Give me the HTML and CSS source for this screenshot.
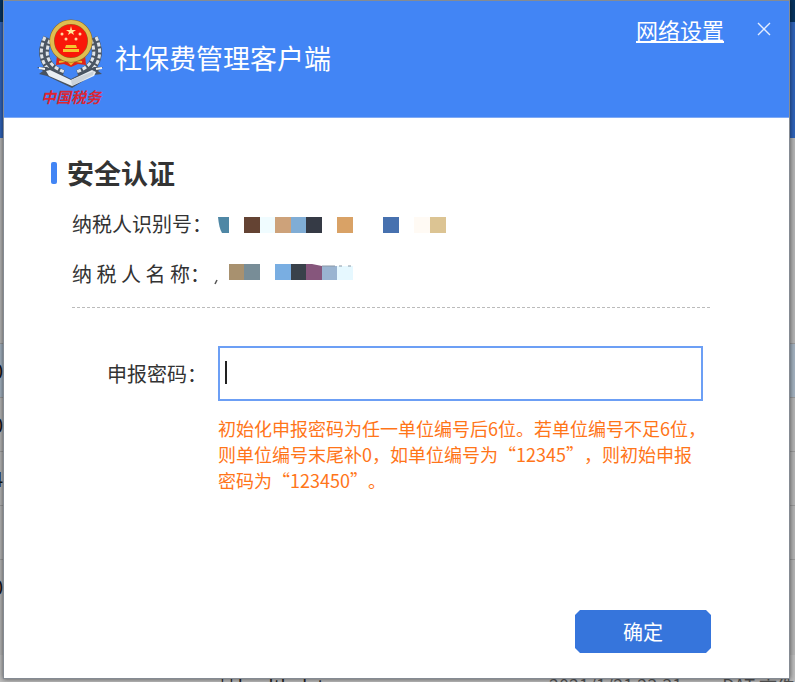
FILE: index.html
```
<!DOCTYPE html>
<html lang="zh-CN">

<head>
    <meta charset="UTF-8">
    <meta name="viewport" content="width=device-width, initial-scale=1.0">
    <title>社保费管理客户端</title>
    <link rel="stylesheet" href="styles.css">
</head>

<body>
    <!-- window behind the dialog -->
    <div class="backdrop" aria-hidden="true">
        <div class="backdrop-rows">
            <span class="selected">0</span>
            <span>0</span>
            <span>4</span>
            <span></span>
            <span>0</span>
        </div>
        <div class="backdrop-file">
            <span class="file-name">| | health.dat</span>
            <span>2021/1/21 23:31</span>
            <span>DAT 文件</span>
        </div>
    </div>

    <div class="dialog">
        <header class="header">
            <svg class="logo" width="70" height="92" viewBox="0 0 70 92">
                <g fill="none" stroke="#4b5663" stroke-width="10">
                    <path d="M13 19 C5 34 9 49 28 56" />
                    <path d="M58 19 C66 34 62 49 43 56" />
                </g>
                <g fill="none" stroke="#dfe4e9" stroke-width="3" stroke-dasharray="4 2">
                    <path d="M10 18 C2 35 7 51 27 59" />
                    <path d="M15 21 C9 35 12 47 30 53" />
                    <path d="M61 18 C69 35 64 51 44 59" />
                    <path d="M56 21 C62 35 59 47 41 53" />
                </g>
                <path d="M2 48 L12 48 L36 60 L59 48 L68 48 L63 52 L67 55 L58 56 L37 69 L12 57 L4 55 L8 52 Z" fill="#485361" />
                <path d="M11 52 L15 51 L36 61 L57 51 L61 53 L59 57 L37 67 L14 57 Z" fill="#e9eef3" />
                <path d="M4 49 L10 50 M67 49 L61 50" stroke="#f1f4f7" stroke-width="2" />
                <path d="M36 61 L59 52 L58 56 L37 67 Z" fill="#cbd2d9" />
                <path d="M22 36 H50 L51 46 L43 45 L36 48 L29 45 L21 46 Z" fill="#e02516" />
                <path d="M24 43 L30 42 M47 43 L41 42 M33 42 L36 45 L39 42" fill="none" stroke="#f1b52b" stroke-width="2" />
                <circle cx="36" cy="22" r="19" fill="#fa1709" stroke="#8d6a23" stroke-width="5" />
                <circle cx="36" cy="22" r="19" fill="none" stroke="#e0bd50" stroke-width="4" />
                <path d="M36 7 L37 11 L41 11 L38 13 L39 16 L36 14 L33 16 L34 13 L31 11 L35 11 Z" fill="#ffe89a" />
                <g fill="#ffd8a0">
                    <circle cx="27" cy="15" r="1.5" />
                    <circle cx="45" cy="15" r="1.5" />
                    <circle cx="31" cy="20" r="1.5" />
                    <circle cx="41" cy="20" r="1.5" />
                </g>
                <path d="M31 26 H41 L42 29 H30 Z" fill="#f5c52f" />
                <path d="M28 30 H44 V33 H28 Z" fill="#f5c52f" />
                <text class="logo-text" x="6" y="84">中国税务</text>
            </svg>
            <h1>社保费管理客户端</h1>
            <nav class="header-actions">
                <a href="#">网络设置</a>
                <button class="close-btn" type="button" aria-label="关闭">
                    <svg width="16" height="16" viewBox="0 0 16 16">
                        <path d="M2 2 L14 14 M14 2 L2 14" />
                    </svg>
                </button>
            </nav>
        </header>

        <form class="content">
            <h2>安全认证</h2>
            <div class="info-row">
                <span class="info-label">纳税人识别号&#65306;</span>
                <svg width="228" height="16" viewBox="0 0 228 16">
                    <path d="M0 0 H11 V16 H4 Q1 11 0 0 Z" fill="#4f87a5" />
                    <rect x="26" width="16" height="16" fill="#644333" />
                    <rect x="42" width="15" height="16" fill="#f0fcff" />
                    <rect x="57" width="16" height="16" fill="#cda27a" />
                    <rect x="73" width="15" height="16" fill="#80add5" />
                    <rect x="88" width="16" height="16" fill="#353a45" />
                    <rect x="119" width="16" height="16" fill="#d9a266" />
                    <rect x="165" width="16" height="16" fill="#4771af" />
                    <rect x="196" width="16" height="16" fill="#fffaf4" />
                    <rect x="212" width="16" height="16" fill="#dcc493" />
                </svg>
            </div>
            <div class="info-row">
                <span class="info-label">纳 税 人 名 称&#65306;</span>
                <svg width="228" height="24" viewBox="0 0 228 24">
                    <path d="M-1 17 L-3 21" stroke="#555" stroke-width="1.5" />
                    <rect x="11" y="1" width="15" height="16" fill="#a8916f" />
                    <rect x="26" y="1" width="16" height="16" fill="#788d97" />
                    <rect x="57" y="1" width="16" height="16" fill="#79aee2" />
                    <rect x="73" y="1" width="15" height="16" fill="#39414a" />
                    <path d="M88 1 H94 L104 3 V17 H88 Z" fill="#86567c" />
                    <rect x="104" y="3" width="15" height="14" fill="#9ab4d1" />
                    <rect x="119" y="3" width="16" height="14" fill="#e6f8ff" />
                    <path d="M104 3 H117 M121 3 H124 M130 3 H133" stroke="#8a98a6" />
                </svg>
            </div>
            <hr>
            <div class="field-row">
                <label for="password">申报密码&#65306;</label>
                <div class="field">
                    <input type="password" id="password">
                    <span class="caret"></span>
                </div>
            </div>
            <p class="hint">初始化申报密码为任一单位编号后6位。若单位编号不足6位&#65292;<br>则单位编号末尾补0&#65292;如单位编号为“12345”&#65292;则初始申报<br>密码为“123450”。</p>
            <button class="submit-btn" type="submit">确定</button>
        </form>
    </div>
</body>

</html>
```
FILE: styles.css
```
* {
    box-sizing: border-box;
}

body {
    margin: 0;
    min-height: 100vh;
    display: flex;
    overflow: hidden;
    position: relative;
    font-family: 'Noto Sans CJK SC', sans-serif;
    font-size: 20px;
    color: #333;
    background: linear-gradient(#06335f 22px, #2f63b8 22px, #2f63b8 138px, #b4b4b4 138px, #b4b4b4 655px, #bdbdbd 655px);
}

/* Window behind */
.backdrop {
    position: absolute;
    inset: 0;
    overflow: hidden;
}

.backdrop-rows {
    margin-top: 343px;
}

.backdrop-rows span {
    display: block;
    height: 54px;
    line-height: 54px;
    border-top: 1px solid #999;
    text-indent: -8px;
    color: #111;
}

.backdrop-rows .selected {
    background: #a3b1bf;
}

.backdrop-file {
    position: absolute;
    top: 675px;
    left: 220px;
    right: 0;
    display: flex;
    gap: 40px;
    font-size: 18px;
    line-height: 20px;
    white-space: nowrap;
    color: #555;
}

.backdrop-file .file-name {
    width: 312px;
    color: #222;
}

/* Dialog */
.dialog {
    position: relative;
    flex: 1;
    display: flex;
    flex-direction: column;
    margin: 0 5px 3px 3px;
    background: #fff;
    border: 1px solid #858b93;
    box-shadow: 0 0 5px rgba(0, 0, 0, 0.6);
}

.header {
    display: flex;
    align-items: flex-start;
    height: 117px;
    padding: 16px 17px 0 31px;
    color: #fff;
    background: #4285f5;
    border-bottom: 1px solid #7faaf5;
}

.logo {
    flex: none;
    margin-top: 2px;
}

.logo-text {
    font-size: 15px;
    font-style: italic;
    font-weight: bold;
    fill: #dc2633;
}

.header h1 {
    margin: 21px 0 0 10px;
    font-size: 27px;
    line-height: 40px;
    font-weight: normal;
}

.header-actions {
    display: flex;
    align-items: center;
    gap: 32px;
    margin-left: auto;
}

.header-actions a {
    font-size: 22px;
    line-height: 24px;
    color: #fff;
}

.close-btn {
    display: flex;
    padding: 0;
    border: none;
    background: none;
    cursor: pointer;
}

.close-btn path {
    fill: none;
    stroke: #e4edff;
    stroke-width: 1.4;
}

.content {
    flex: 1;
    display: flex;
    flex-direction: column;
    padding: 35px 78px 25px 68px;
}

h2 {
    display: flex;
    align-items: center;
    gap: 10px;
    margin: 0 0 10px -21px;
    font-size: 27px;
    line-height: 40px;
}

h2::before {
    content: "";
    width: 6px;
    height: 22px;
    border-radius: 2px;
    background: #4285f5;
}

.info-row {
    display: flex;
    align-items: center;
    height: 40px;
    margin-bottom: 10px;
}

.info-row svg {
    margin-top: 4px;
    overflow: visible;
}

.info-label {
    width: 146px;
    white-space: pre;
}

hr {
    width: 100%;
    height: 1px;
    margin: 4px 0 38px;
    border: none;
    background: repeating-linear-gradient(90deg, #bbb 0 3px, #fff 3px 5px);
}

.field-row {
    display: flex;
    align-items: center;
    margin-right: 8px;
}

.field-row label {
    width: 146px;
    padding-left: 35px;
}

.field {
    flex: 1;
    position: relative;
}

.field input {
    display: block;
    width: 100%;
    height: 55px;
    padding: 0 8px;
    font-size: 20px;
    border: 2px solid #6c9ff5;
    outline: none;
}

.caret {
    position: absolute;
    top: 15px;
    left: 7px;
    width: 2px;
    height: 23px;
    background: #222;
}

.hint {
    margin: 14px 0 24px 146px;
    font-size: 18px;
    line-height: 26px;
    white-space: nowrap;
    text-spacing-trim: space-all;
    color: #ff7519;
}

.submit-btn {
    align-self: flex-end;
    width: 136px;
    height: 43px;
    margin-top: auto;
    font-family: inherit;
    font-size: 20px;
    color: #fff;
    background: #3675dc;
    border: none;
    clip-path: polygon(5px 0, calc(100% - 5px) 0, 100% 5px, 100% calc(100% - 5px), calc(100% - 5px) 100%, 5px 100%, 0 calc(100% - 5px), 0 5px);
    cursor: pointer;
}
```
